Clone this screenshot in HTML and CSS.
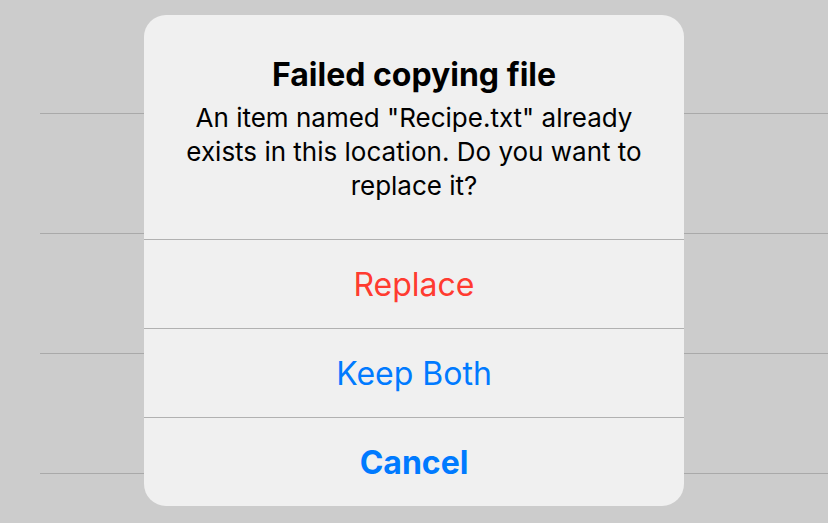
FILE: index.html
```html
<!DOCTYPE html>
<html lang="en">
<head>
    <meta charset="utf-8" />
    <meta name="viewport" content="width=device-width, initial-scale=1.0">
    <link rel="stylesheet" href="styles.css">
    <title>Files</title>
</head>
<body>

<!-- File list behind the alert -->
<ul class="file-list">
    <li class="file-row first"></li>
    <li class="file-row"></li>
    <li class="file-row"></li>
    <li class="file-row"></li>
</ul>

<!-- Replace alert -->
<div class="alert">
    <div class="alert-body">
        <h1 class="alert-title">Failed copying file</h1>
        <p class="alert-message">An item named "Recipe.txt" already exists in this location. Do you want to replace it?</p>
    </div>
    <button class="alert-action destructive">Replace</button>
    <button class="alert-action">Keep Both</button>
    <button class="alert-action preferred">Cancel</button>
</div>

</body>
</html>
```

FILE: styles.css
```css
body {
    margin: 0;
    height: 523px;
    overflow: hidden;
    background: #cccccc;
    font-family: Inter, "Noto Sans", sans-serif;
}

.file-list {
    list-style: none;
    margin: 0;
    padding: 0 0 0 40px;
}

.file-row {
    height: 119px;
    border-bottom: 1px solid #a9a9a9;
}

.file-row.first {
    height: 113px;
}

/* alert floats above the list */
.alert {
    position: absolute;
    left: 144px;
    top: 15px;
    width: 540px;
    background: #f0f0f0;
    border-radius: 22px;
    overflow: hidden;
    display: flex;
    flex-direction: column;
}

.alert-body {
    padding: 43px 40px 36px;
    text-align: center;
    border-bottom: 1px solid #b1b1b1;
}

.alert-title {
    margin: 0;
    font-size: 32px;
    line-height: 34px;
    font-weight: 700;
    color: #000;
}

.alert-message {
    margin: 9px 0 0;
    font-size: 26px;
    line-height: 34px;
    color: #000;
}

.alert-action {
    box-sizing: content-box;
    height: 88px;
    border: none;
    background: none;
    font-family: inherit;
    font-size: 32px;
    color: #007aff;
    padding: 0;
}

.alert-action + .alert-action {
    border-top: 1px solid #b1b1b1;
}

.alert-action.destructive {
    color: #ff3b30;
}

.alert-action.preferred {
    font-weight: 700;
}
```
